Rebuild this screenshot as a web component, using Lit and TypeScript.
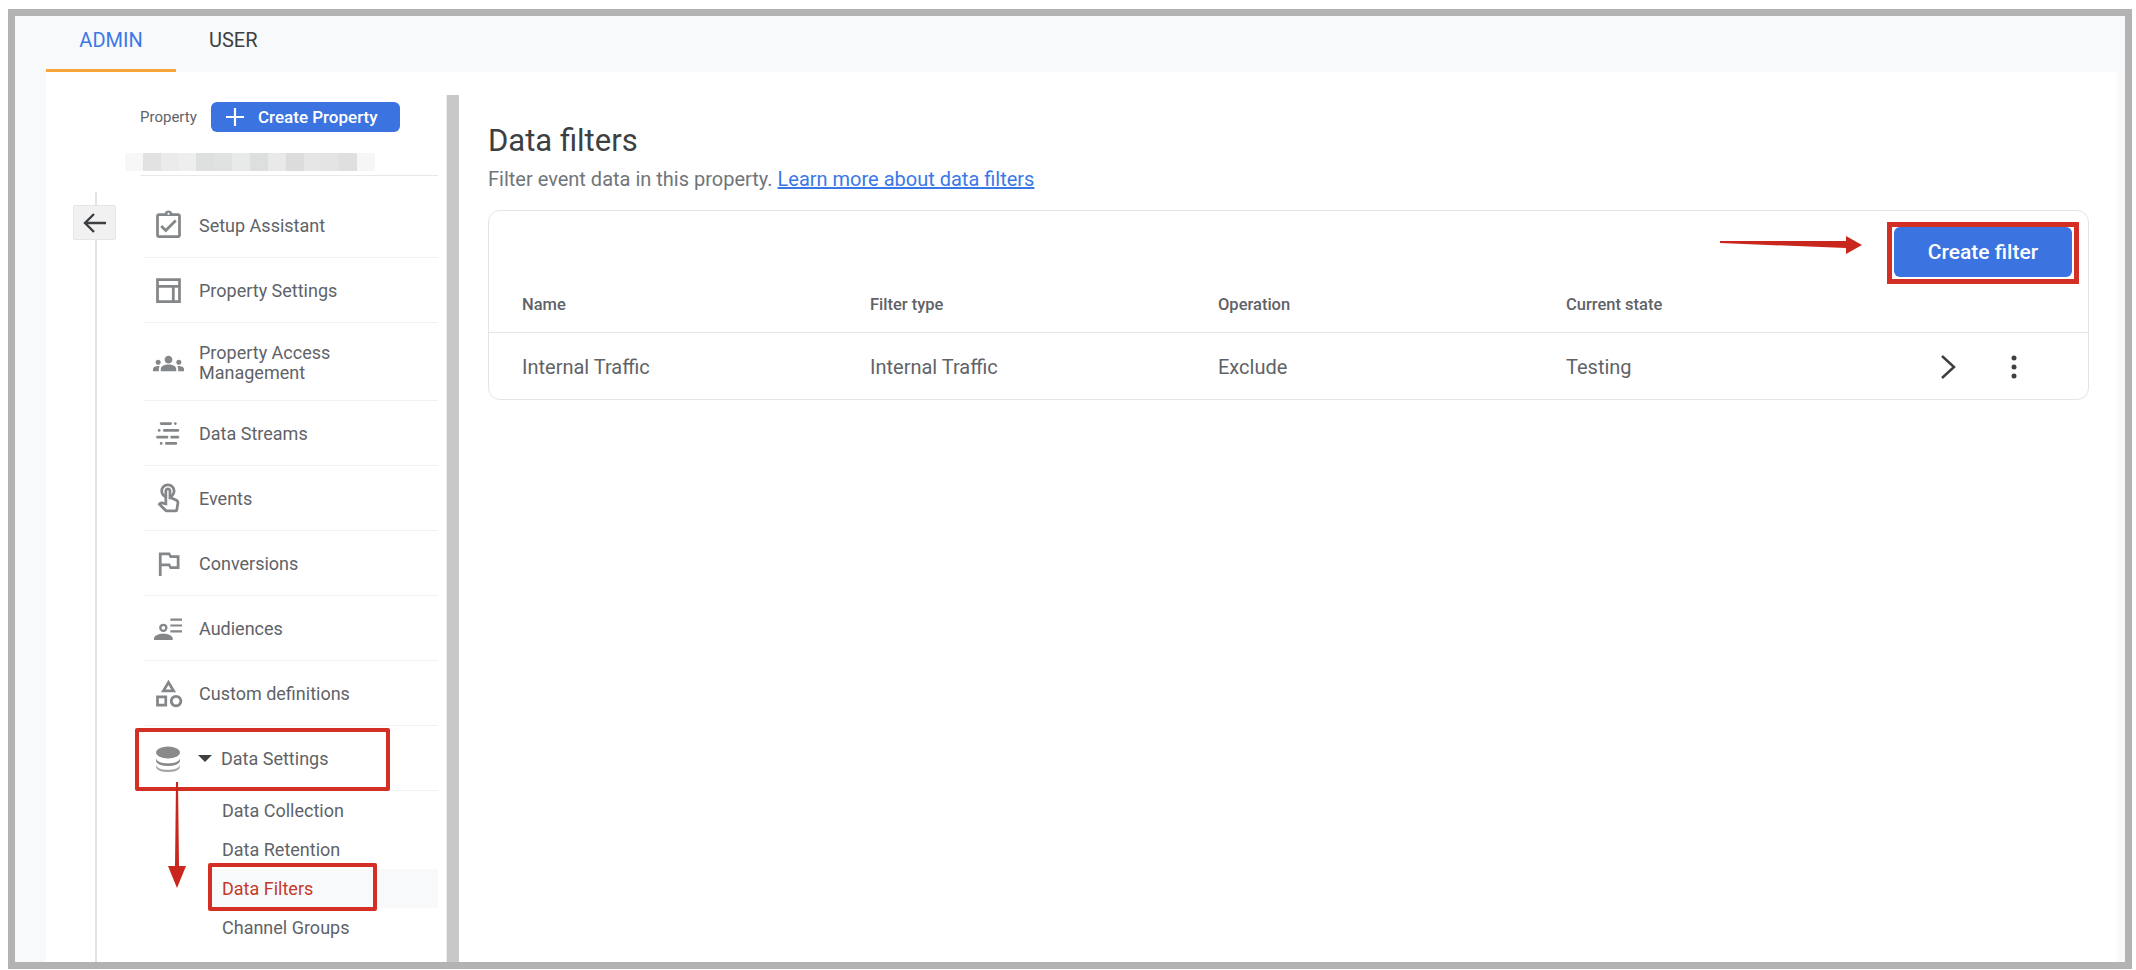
import { LitElement, css, html, svg } from "lit";
import { customElement } from "lit/decorators.js";

const filled = (d: string) => svg`<path d=${d} fill="currentColor"></path>`;

const ICONS = {
  setup: filled(
    "M19 3h-4.18C14.4 1.84 13.3 1 12 1s-2.4.84-2.82 2H5c-1.1 0-2 .9-2 2v14c0 1.1.9 2 2 2h14c1.1 0 2-.9 2-2V5c0-1.1-.9-2-2-2zm-7-.25c.41 0 .75.34.75.75s-.34.75-.75.75-.75-.34-.75-.75.34-.75.75-.75zM19 19H5V5h14v14zM17.99 9l-1.41-1.42-6.59 6.59-2.58-2.57-1.42 1.41 4 3.99z",
  ),
  settings: svg`<path d="M4 4h16v16H4zM4 9h16M15.500 9v11" fill="none" stroke="currentColor" stroke-width="2"></path>`,
  access: filled(
    "M4 13c1.1 0 2-.9 2-2s-.9-2-2-2-2 .9-2 2 .9 2 2 2zm1.13 1.1c-.37-.06-.74-.1-1.13-.1-.99 0-1.93.21-2.78.58C.48 14.9 0 15.62 0 16.43V18h4.5v-1.61c0-.83.23-1.61.63-2.29zM20 13c1.1 0 2-.9 2-2s-.9-2-2-2-2 .9-2 2 .9 2 2 2zm4 3.43c0-.81-.48-1.53-1.22-1.85-.85-.37-1.79-.58-2.78-.58-.39 0-.76.04-1.13.1.4.68.63 1.46.63 2.29V18H24v-1.57zm-7.76-2.78c-1.17-.52-2.61-.9-4.24-.9-1.63 0-3.07.39-4.24.9C6.68 14.13 6 15.21 6 16.39V18h12v-1.61c0-1.18-.68-2.26-1.76-2.74zM12 12c1.66 0 3-1.34 3-3s-1.34-3-3-3-3 1.34-3 3 1.34 3 3 3z",
  ),
  streams: svg`<path d="M5 2.500h9M18.500 2.500h.01M3 9h.01M8 9h13M1.500 15.500h9M15 15.500h6M5 21.500h.01M10 21.500h9" fill="none" stroke="currentColor" stroke-width="2.800" stroke-linecap="round"></path>`,
  events: filled(
    "M18.19 12.44l-3.24-1.62c1.29-1 2.12-2.56 2.12-4.32 0-3.03-2.47-5.5-5.5-5.5s-5.5 2.47-5.5 5.5c0 2.13 1.22 3.98 3 4.89v3.26c-2.15-.46-2.02-.44-2.26-.44-.53 0-1.03.21-1.41.59L4 16.22l5.09 5.09C9.52 21.75 10.12 22 10.74 22h6.3c.98 0 1.81-.7 1.97-1.67l.8-4.71c.22-1.3-.43-2.58-1.62-3.18zm-.35 2.85l-.8 4.71h-6.3c-.09 0-.17-.04-.24-.1l-3.68-3.68 4.25.89V6.500c0-.28.22-.5.5-.5s.5.22.5.5v6h1.760l3.460 1.730c.4.2.62.63.55 1.060zM8.070 6.500c0-1.930 1.570-3.500 3.500-3.500s3.500 1.570 3.500 3.500c0 .95-.38 1.810-1 2.440V6.500c0-1.380-1.120-2.500-2.500-2.500s-2.500 1.120-2.500 2.500v2.440c-.62-.63-1-1.490-1-2.440z",
  ),
  conversions: filled(
    "M14 6l-1-2H5v17h2v-7h5l1 2h7V6h-6zm4 8h-4l-1-2H7V6h5l1 2h5v6z",
  ),
  audiences: svg`
    <circle cx="8" cy="11" r="2.600" fill="none" stroke="currentColor" stroke-width="2"></circle>
    <path d="M0 21.500v-1.500c0-2.500 4-4 8-4s8 1.500 8 4v1.500z" fill="currentColor"></path>
    <path d="M14 4h10M14 9h10M14 14h10" fill="none" stroke="currentColor" stroke-width="1.800"></path>`,
  custom: filled(
    "M12 2l-5.500 9h11L12 2zm0 3.840L13.930 9h-3.870L12 5.840zM17.500 13c-2.490 0-4.500 2.010-4.500 4.500s2.010 4.500 4.500 4.500 4.500-2.010 4.500-4.500-2.010-4.500-4.500-4.500zm0 7c-1.380 0-2.500-1.120-2.500-2.500s1.120-2.500 2.500-2.500 2.500 1.120 2.500 2.500-1.120 2.500-2.500 2.500zM3 21.500h8v-8H3v8zm2-6h4v4H5v-4z",
  ),
  data: svg`
    <ellipse cx="12" cy="6" rx="11" ry="5.500" fill="currentColor"></ellipse>
    <path d="M1 11.500c1 3 5.500 4.500 11 4.500s10-1.500 11-4.500v2.500c-1 3-5.500 4.500-11 4.500s-10-1.500-11-4.500z" fill="currentColor"></path>
    <path d="M1 17.500c1 3 5.500 4.500 11 4.500s10-1.500 11-4.500v2c-1 3-5.500 4.500-11 4.500s-10-1.500-11-4.500z" fill="currentColor" opacity=".75"></path>`,
};

type NavItem = { icon: keyof typeof ICONS; label: string; size: number; tall?: boolean };

const NAV: NavItem[] = [
  { icon: "setup", label: "Setup Assistant", size: 33 },
  { icon: "settings", label: "Property Settings", size: 33 },
  { icon: "access", label: "Property Access Management", size: 31, tall: true },
  { icon: "streams", label: "Data Streams", size: 25 },
  { icon: "events", label: "Events", size: 33 },
  { icon: "conversions", label: "Conversions", size: 33 },
  { icon: "audiences", label: "Audiences", size: 28 },
  { icon: "custom", label: "Custom definitions", size: 33 },
];

const SUB_ITEMS = ["Data Collection", "Data Retention", "Data Filters", "Channel Groups"];

const COLUMNS = ["Name", "Filter type", "Operation", "Current state"];
const ROW = ["Internal Traffic", "Internal Traffic", "Exclude", "Testing"];

const MOSAIC = [
  "#f7f7f7", "#e2e2e2", "#ebebeb", "#eeeeee", "#dedfdf", "#e0e1e1", "#e8e9e9",
  "#dddfdf", "#e9e9e9", "#dcdcdc", "#e6e6e6", "#e4e4e4", "#dfdfdf", "#f6f6f6",
];

@customElement("app-root")
export class AppRoot extends LitElement {
  render() {
    return html`
      <div class="frame">
        <div class="tabs">
          <div class="tab active">ADMIN</div>
          <div class="tab">USER</div>
        </div>
        <div class="body">
          <aside class="sidebar">
            <div class="rail">
              <div class="back">
                <svg viewBox="0 0 24 24" width="24" height="24">
                  <path
                    d="M23 12H2M11 3l-9 9 9 9"
                    fill="none"
                    stroke="currentColor"
                    stroke-width="2.400"
                  ></path>
                </svg>
              </div>
            </div>
            <nav class="nav">
              <div class="property">
                <span class="property-label">Property</span>
                <div class="create-property">
                  <svg viewBox="0 0 18 18" width="18" height="18">
                    <path d="M9 0v18M0 9h18" stroke="currentColor" stroke-width="2.200"></path>
                  </svg>
                  <span>Create Property</span>
                </div>
              </div>
              <div class="mosaic">
                ${MOSAIC.map((c) => html`<i style="background:${c}"></i>`)}
              </div>
              <div class="items">
                ${NAV.map(
                  (item) => html`
                    <div class="item ${item.tall ? "tall" : ""}">
                      <span class="item-icon">
                        <svg
                          viewBox="0 0 24 24"
                          width=${item.size}
                          height=${item.size}
                        >
                          ${ICONS[item.icon]}
                        </svg>
                      </span>
                      <span class="item-label">${item.label}</span>
                    </div>
                  `,
                )}
                <div class="item group">
                  <span class="item-icon">
                    <svg viewBox="0 0 24 24" width="26" height="26">${ICONS.data}</svg>
                  </span>
                  <span class="caret"></span>
                  <span class="item-label">Data Settings</span>
                </div>
                ${SUB_ITEMS.map(
                  (label) => html`
                    <div class="sub ${label === "Data Filters" ? "current" : ""}">
                      ${label}
                    </div>
                  `,
                )}
              </div>
            </nav>
            <div class="scrollbar"></div>
          </aside>
          <main class="main">
            <h1>Data filters</h1>
            <p class="intro">
              Filter event data in this property.
              <a>Learn more about data filters</a>
            </p>
            <section class="card">
              <div class="toolbar">
                <div class="create-filter">Create filter</div>
              </div>
              <div class="grid head">
                ${COLUMNS.map((c) => html`<div>${c}</div>`)}
              </div>
              <div class="grid row">
                ${ROW.map((c) => html`<div>${c}</div>`)}
                <div class="actions">
                  <svg viewBox="0 0 24 24" width="24" height="24">
                    <path
                      d="M6 1l12 11L6 23"
                      fill="none"
                      stroke="currentColor"
                      stroke-width="2.500"
                    ></path>
                  </svg>
                  <svg viewBox="0 0 24 24" width="24" height="24">
                    <circle cx="12" cy="3" r="2.500" fill="currentColor"></circle>
                    <circle cx="12" cy="12" r="2.500" fill="currentColor"></circle>
                    <circle cx="12" cy="21" r="2.500" fill="currentColor"></circle>
                  </svg>
                </div>
              </div>
            </section>
          </main>
        </div>
      </div>

      <!-- red annotations drawn on top of the screenshot -->
      <div class="mark mark-settings"></div>
      <div class="mark mark-filters"></div>
      <div class="mark mark-button"></div>
      <svg class="arrow arrow-down" viewBox="0 0 18 106" width="18" height="106">
        <path d="M8 0h2l1 84h7L9 106 0 84h7z" fill="#c9271d"></path>
      </svg>
      <svg class="arrow arrow-right" viewBox="0 0 142 18" width="142" height="18">
        <path d="M0 5l126 0V0l16 9-16 9v-6L0 7z" fill="#c9271d"></path>
      </svg>
    `;
  }

  static styles = css`
    :host {
      display: block;
      position: relative;
      width: 2136px;
      height: 970px;
      box-sizing: border-box;
      padding: 9px 4px 0 8px;
      background: #fff;
      font-family: Roboto, "Liberation Sans", sans-serif;
      color: #5f6368;
      overflow: hidden;
    }
    .frame {
      display: flex;
      flex-direction: column;
      height: 960px;
      box-sizing: border-box;
      border: 7px solid #b3b3b3;
      background: #f8f9fb;
    }
    .tabs {
      display: flex;
      height: 56px;
      padding-left: 31px;
      flex: none;
    }
    .tab {
      box-sizing: border-box;
      height: 56px;
      line-height: 48px;
      padding-left: 33px;
      font-size: 20px;
      color: #3c4043;
    }
    .tab.active {
      width: 130px;
      padding-left: 0;
      text-align: center;
      color: #3b78e7;
      border-bottom: 3px solid #f9a53c;
    }
    .body {
      flex: 1;
      min-height: 0;
      display: flex;
      margin: 0 8px 0 31px;
      background: #fff;
    }
    .sidebar {
      display: grid;
      grid-template-columns: 94px 298px 9px 12px;
      flex: none;
    }
    .rail {
      position: relative;
      margin: 120px 0 0 49px;
      border-left: 2px solid #e3e3e3;
    }
    .back {
      position: absolute;
      left: -24px;
      top: 13px;
      width: 43px;
      height: 35px;
      box-sizing: border-box;
      display: flex;
      align-items: center;
      justify-content: center;
      background: #f1f1f1;
      border: 1px solid #e6e6e6;
      border-radius: 2px;
      color: #3c4043;
    }
    .nav {
      grid-column: 2;
      padding-top: 30px;
    }
    .property {
      display: flex;
      align-items: center;
      height: 30px;
      font-size: 15px;
    }
    .property-label {
      width: 71px;
    }
    .create-property {
      display: flex;
      align-items: center;
      box-sizing: border-box;
      width: 189px;
      height: 30px;
      padding-left: 15px;
      gap: 14px;
      background: #3b73e0;
      border-radius: 6px;
      color: #fff;
      font-weight: 500;
      font-size: 17px;
    }
    .mosaic {
      display: flex;
      margin: 21px 0 4px -15px;
      width: 250px;
      height: 18px;
    }
    .mosaic i {
      flex: 1;
    }
    .items {
      border-top: 1px solid #e8e8e8;
      padding-top: 17px;
    }
    .item {
      display: flex;
      align-items: center;
      box-sizing: border-box;
      height: 65px;
      margin-left: 3px;
      padding-top: 1px;
      border-bottom: 1px solid #f1f1f1;
      font-size: 18px;
      line-height: 20px;
    }
    .item.tall {
      height: 78px;
      padding-top: 3px;
    }
    .item-icon {
      flex: none;
      display: flex;
      align-items: center;
      justify-content: center;
      width: 36px;
      margin: 0 13px 0 7px;
      color: #848789;
    }
    .item-label {
      max-width: 180px;
    }
    .group .item-icon {
      color: #8a8a8a;
    }
    .caret {
      width: 0;
      height: 0;
      margin: 0 9px 0 -1px;
      border: 7px solid transparent;
      border-top: 7px solid #3c4043;
      border-bottom: 0;
    }
    .sub {
      box-sizing: border-box;
      height: 39px;
      line-height: 39px;
      margin-left: 68px;
      padding-left: 14px;
      font-size: 18px;
    }
    .sub.current {
      background: #f8f9fb;
      color: #c53929;
    }
    .scrollbar {
      grid-column: 4;
      margin-top: 23px;
      background: #c8c8c8;
      box-shadow: -1px 0 0 #ececec;
    }
    .main {
      flex: 1;
      min-width: 0;
      padding: 51px 28px 0 29px;
    }
    h1 {
      margin: 0;
      font-size: 31px;
      font-weight: 400;
      line-height: 36px;
      color: #3c4043;
    }
    .intro {
      margin: 8px 0 19px;
      font-size: 20px;
      line-height: 24px;
      color: #70757a;
    }
    .intro a {
      color: #3b78e7;
      text-decoration: underline;
    }
    .card {
      box-sizing: border-box;
      height: 190px;
      border: 1px solid #e4e4e6;
      border-radius: 12px;
    }
    .toolbar {
      display: flex;
      justify-content: flex-end;
      padding: 16px 16px 0 0;
    }
    .create-filter {
      width: 178px;
      height: 50px;
      line-height: 50px;
      text-align: center;
      background: #3b73e0;
      border-radius: 6px;
      color: #fff;
      font-size: 21px;
      font-weight: 500;
    }
    .grid {
      display: grid;
      grid-template-columns: repeat(4, 348px) 1fr;
      align-items: center;
      padding-left: 33px;
    }
    .head {
      height: 55px;
      border-bottom: 1px solid #e4e4e6;
      font-size: 16.500px;
      font-weight: 500;
    }
    .row {
      height: 67px;
      font-size: 20px;
    }
    .actions {
      display: flex;
      gap: 42px;
      padding-left: 22px;
      color: #3c4043;
    }
    .mark {
      position: absolute;
      box-sizing: border-box;
      border: 4px solid #d32f24;
      border-radius: 2px;
    }
    .mark-settings {
      left: 135px;
      top: 728px;
      width: 255px;
      height: 63px;
    }
    .mark-filters {
      left: 208px;
      top: 863px;
      width: 169px;
      height: 48px;
    }
    .mark-button {
      left: 1887px;
      top: 222px;
      width: 192px;
      height: 62px;
      border-width: 5px;
      border-radius: 0;
    }
    .arrow {
      position: absolute;
    }
    .arrow-down {
      left: 168px;
      top: 782px;
    }
    .arrow-right {
      left: 1720px;
      top: 236px;
    }
  `;
}

declare global {
  interface HTMLElementTagNameMap {
    "app-root": AppRoot;
  }
}
